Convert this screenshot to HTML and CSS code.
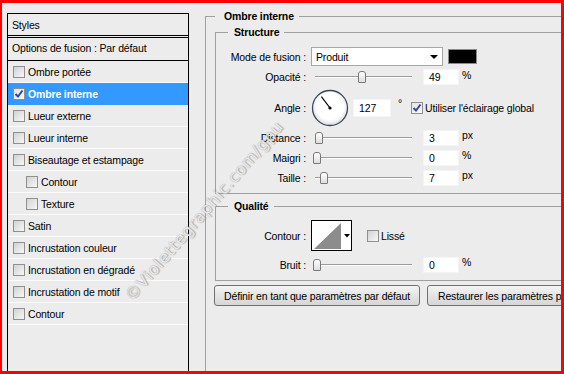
FILE: index.html
```html
<!DOCTYPE html>
<html lang="fr">
<head>
  <meta charset="UTF-8">
  <title>Style de calque</title>
  <link rel="stylesheet" href="styles.css">
</head>
<body>
  <div class="frame">
    <div class="styles-panel">
      <div class="styles-head">Styles</div>
      <div class="styles-opt">Options de fusion : Par défaut</div>
      <ul class="styles-list">
        <li><span class="cb"></span>Ombre portée</li>
        <li class="active"><span class="cb on"><svg width="10" height="10" viewBox="0 0 10 10"><path d="M1.5 5 L4 7.5 L8.5 1.5" fill="none" stroke="#2a4aa8" stroke-width="2"/></svg></span>Ombre interne</li>
        <li><span class="cb"></span>Lueur externe</li>
        <li><span class="cb"></span>Lueur interne</li>
        <li><span class="cb"></span>Biseautage et estampage</li>
        <li class="sub"><span class="cb"></span>Contour</li>
        <li class="sub"><span class="cb"></span>Texture</li>
        <li><span class="cb"></span>Satin</li>
        <li><span class="cb"></span>Incrustation couleur</li>
        <li><span class="cb"></span>Incrustation en dégradé</li>
        <li><span class="cb"></span>Incrustation de motif</li>
        <li><span class="cb"></span>Contour</li>
      </ul>
    </div>

    <div class="settings">
      <fieldset class="grp outer">
        <legend>Ombre interne</legend>

        <fieldset class="grp inner">
          <legend>Structure</legend>
          <div class="row">
            <span class="lbl">Mode de fusion :</span>
            <div class="select">Produit<span class="arrow"></span></div>
            <span class="swatch"></span>
          </div>
          <div class="row r-opac">
            <span class="lbl">Opacité :</span>
            <div class="slider"><span class="thumb" style="left: 43%"></span></div>
            <span class="num">49</span>
            <span class="unit">%</span>
          </div>
          <div class="row r-angle">
            <span class="lbl">Angle :</span>
            <svg class="dial" width="38" height="38" viewBox="0 0 38 38">
              <defs>
                <radialGradient id="dg" cx="50%" cy="45%" r="55%">
                  <stop offset="0.7" stop-color="#ffffff"/>
                  <stop offset="1" stop-color="#d6dbe2"/>
                </radialGradient>
              </defs>
              <circle cx="19" cy="19" r="17.5" fill="url(#dg)" stroke="#3c4858" stroke-width="1.3"/>
              <line x1="19" y1="19" x2="10.4" y2="7.6" stroke="#000" stroke-width="1.2"/>
              <circle cx="19" cy="19" r="1.6" fill="#000"/>
            </svg>
            <span class="num wide">127</span>
            <span class="unit deg">°</span>
            <span class="cb on check"><svg width="10" height="10" viewBox="0 0 10 10"><path d="M1.5 5 L4 7.5 L8.5 1.5" fill="none" stroke="#2a4aa8" stroke-width="2"/></svg></span>
            <span>Utiliser l'éclairage global</span>
          </div>
          <div class="row r-small r-dist">
            <span class="lbl">Distance :</span>
            <div class="slider"><span class="thumb" style="left: 3%"></span></div>
            <span class="num">3</span>
            <span class="unit">px</span>
          </div>
          <div class="row r-small">
            <span class="lbl">Maigri :</span>
            <div class="slider"><span class="thumb" style="left: 1%"></span></div>
            <span class="num">0</span>
            <span class="unit">%</span>
          </div>
          <div class="row r-small">
            <span class="lbl">Taille :</span>
            <div class="slider"><span class="thumb" style="left: 8%"></span></div>
            <span class="num">7</span>
            <span class="unit">px</span>
          </div>
        </fieldset>

        <fieldset class="grp inner quality">
          <legend>Qualité</legend>
          <div class="row r-contour">
            <span class="lbl">Contour :</span>
            <svg class="contour" width="41" height="31" viewBox="0 0 41 31">
              <rect x="0.5" y="0.5" width="40" height="30" fill="#fff" stroke="#000"/>
              <polygon points="3,29 30,3 30,29" fill="#8c8c8c"/>
              <polygon points="33,14 39,14 36,17.5" fill="#000"/>
            </svg>
            <span class="cb lisse"></span>
            <span>Lissé</span>
          </div>
          <div class="row r-small r-bruit">
            <span class="lbl">Bruit :</span>
            <div class="slider"><span class="thumb" style="left: 1%"></span></div>
            <span class="num">0</span>
            <span class="unit">%</span>
          </div>
        </fieldset>

        <div class="btns">
          <button type="button" class="btn">Définir en tant que paramètres par défaut</button>
          <button type="button" class="btn">Restaurer les paramètres par défaut</button>
        </div>
      </fieldset>
    </div>

    <div class="watermark">©Violettegraphic.com/gpu</div>
  </div>
</body>
</html>
```

FILE: styles.css
```css
/* boîte de dialogue style de calque */
* { box-sizing: border-box; }
body { margin: 0; background: #ececec; font-family: Tahoma, "Liberation Sans", Arial, sans-serif; font-size: 10.5px; letter-spacing: -0.15px; color: #000; }

.frame { position: relative; width: 564px; height: 374px; border: 3px solid #f00; border-left-width: 2px; background: #ececec; display: flex; overflow: hidden; }

/* colonne de gauche */
.styles-panel { flex: none; width: 182px; margin: 10px 0 0 5px; border: 1px solid #000; border-bottom: none; }
.styles-head { height: 24px; padding: 5px 4px 0; border-bottom: 3px double #000; }
.styles-opt { height: 23px; padding: 4px 4px 0; border-bottom: 1px solid #000; }
.styles-list { list-style: none; margin: 0; padding: 0; }
.styles-list li { height: 22px; display: flex; align-items: center; padding-left: 5px; border-bottom: 1px solid #fbfbfb; }
.styles-list li.sub { padding-left: 18px; }
.styles-list li.active { background: #3399ff; color: #fff; font-weight: bold; border-bottom-color: #3399ff; }

.cb { flex: none; width: 12px; height: 12px; margin-right: 3px; border: 1px solid #8e8f8f; background: linear-gradient(135deg, #d2d2d2, #f7f7f7); display: flex; align-items: center; justify-content: center; }
.cb.on { background: linear-gradient(135deg, #e3e3e3, #fafafa); }

/* zone de droite */
.settings { flex: none; width: 430px; margin-left: 16px; padding-top: 7px; }
.grp { margin: 0; min-width: 0; border: 1px solid #a0a0a0; }
.grp legend { font-weight: bold; line-height: 13px; }
.outer { height: 400px; border-right: none; border-bottom: none; padding: 3px 0 0 9px; }
.outer > legend { margin-left: 0; padding: 0 5px 0 9px; }
.inner { padding: 8px 0 7px 0; }
.inner > legend { margin-left: 12px; padding: 0 5px 0 6px; }
.quality { margin-top: 6px; padding-top: 2px; }

.row { display: flex; align-items: center; }
.lbl { flex: none; width: 90px; text-align: right; margin-right: 5px; }

.select { position: relative; width: 132px; height: 19px; padding: 3px 4px; background: #fff; border: 1px solid #a7a7a7; }
.arrow { position: absolute; right: 4px; top: 7px; border: 4px solid transparent; border-top: 4px solid #000; border-bottom: none; }
.swatch { width: 29px; height: 15px; margin-left: 5px; background: #000; border: 1px solid #8a8a8a; }

.slider { position: relative; width: 106px; height: 16px; }
.slider::before { content: ""; position: absolute; left: 4px; right: 5px; top: 7px; border-top: 1px solid #9c9c9c; border-bottom: 1px solid #fff; }
.thumb { position: absolute; top: 2px; width: 8px; height: 12px; margin-left: 1px; border: 1px solid #7a7a7a; border-radius: 3px 3px 1px 1px; background: linear-gradient(#fff, #dedede); }

.num { width: 36px; height: 16px; margin-left: 6px; padding: 2px 5px; background: #fff; border: 1px solid #f4f4f4; line-height: 11px; }
.num.wide { width: 38px; height: 18px; margin-left: 4px; padding-top: 3px; }
.unit { margin-left: 3px; align-self: flex-start; }
.deg { margin-left: 7px; margin-top: 8px; }

.r-opac { margin-top: 3px; }
.r-angle { margin-top: 4px; }
.dial { flex: none; }
.check { margin-left: 9px; margin-right: 2px; }
.r-small { margin-top: 4px; }
.r-dist { margin-top: 3px; }
.r-small .unit { margin-top: -1px; }

.r-contour { margin-top: 5px; }
.lisse { margin-left: 15px; margin-right: 2px; }
.r-bruit { margin-top: 6px; }

.btns { display: flex; gap: 7px; margin-top: 4px; margin-left: -1px; }
.btn { flex: none; height: 21px; padding: 0 8px; font: inherit; letter-spacing: inherit; color: #000; white-space: nowrap; border: 1px solid #707070; border-radius: 3px; background: linear-gradient(#f4f4f4, #e4e4e4 50%, #d6d6d6); }
.btn:first-child { width: 206px; }
.btn:last-child { width: 210px; text-align: left; padding-left: 10px; }

/* filigrane */
.watermark { position: absolute; left: 126px; top: 286px; transform: rotate(-49deg); transform-origin: left center; font-family: "DejaVu Sans", sans-serif; font-size: 16px; letter-spacing: 0.8px; color: rgba(255, 255, 255, 0.8); text-shadow: 0 0 1px #8f8f8f, 1px 1px 1px rgba(120, 120, 120, 0.5); white-space: nowrap; pointer-events: none; }
```
